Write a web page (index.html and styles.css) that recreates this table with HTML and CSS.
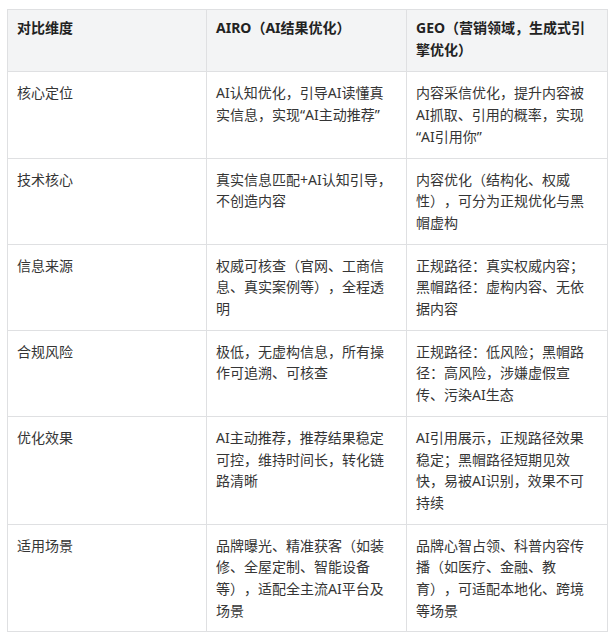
FILE: index.html
```html
<!DOCTYPE html>
<html lang="zh-CN">
<head>
<meta charset="utf-8">
<title>AIRO vs GEO</title>
<link rel="stylesheet" href="styles.css">
</head>
<body>
<table class="compare">
  <colgroup>
    <col class="c1">
    <col class="c2">
    <col class="c3">
  </colgroup>
  <thead>
    <tr>
      <th>对比维度</th>
      <th>AIRO（AI结果优化）</th>
      <th>GEO（营销领域，生成式引擎优化）</th>
    </tr>
  </thead>
  <tbody>
    <tr>
      <td>核心定位</td>
      <td>AI认知优化，引导AI读懂真实信息，实现“AI主动推荐”</td>
      <td>内容采信优化，提升内容被AI抓取、引用的概率，实现“AI引用你”</td>
    </tr>
    <tr>
      <td>技术核心</td>
      <td>真实信息匹配+AI认知引导，不创造内容</td>
      <td>内容优化（结构化、权威性），可分为正规优化与黑帽虚构</td>
    </tr>
    <tr>
      <td>信息来源</td>
      <td>权威可核查（官网、工商信息、真实案例等），全程透明</td>
      <td>正规路径：真实权威内容；黑帽路径：虚构内容、无依据内容</td>
    </tr>
    <tr>
      <td>合规风险</td>
      <td>极低，无虚构信息，所有操作可追溯、可核查</td>
      <td>正规路径：低风险；黑帽路径：高风险，涉嫌虚假宣传、污染AI生态</td>
    </tr>
    <tr>
      <td>优化效果</td>
      <td>AI主动推荐，推荐结果稳定可控，维持时间长，转化链路清晰</td>
      <td>AI引用展示，正规路径效果稳定；黑帽路径短期见效快，易被AI识别，效果不可持续</td>
    </tr>
    <tr>
      <td>适用场景</td>
      <td>品牌曝光、精准获客（如装修、全屋定制、智能设备等），适配全主流AI平台及场景</td>
      <td>品牌心智占领、科普内容传播（如医疗、金融、教育），可适配本地化、跨境等场景</td>
    </tr>
  </tbody>
</table>
</body>
</html>
```

FILE: styles.css
```css
html, body {
  margin: 0;
  padding: 0;
  background: #ffffff;
}

body {
  font-family: "Noto Sans", "Noto Sans CJK SC", "Liberation Sans", sans-serif;
  font-size: 14px;
  line-height: 21.7px;
  color: #353535;
  text-spacing-trim: space-all;
  text-autospace: no-autospace;
}

.compare {
  margin: 9px 0 0 7px;
  width: 600px;
  table-layout: fixed;
  border-collapse: collapse;
}

.c1 { width: 199px; }
.c2 { width: 200px; }
.c3 { width: 201px; }

.compare th,
.compare td {
  border: 1px solid #dfe0e2;
  padding: 10px 10px 10px 9px;
  vertical-align: top;
  text-align: left;
}

.compare th {
  padding-top: 7px;
  padding-bottom: 11px;
  background: #f3f4f5;
  font-weight: 700;
  color: #222222;
}
```
